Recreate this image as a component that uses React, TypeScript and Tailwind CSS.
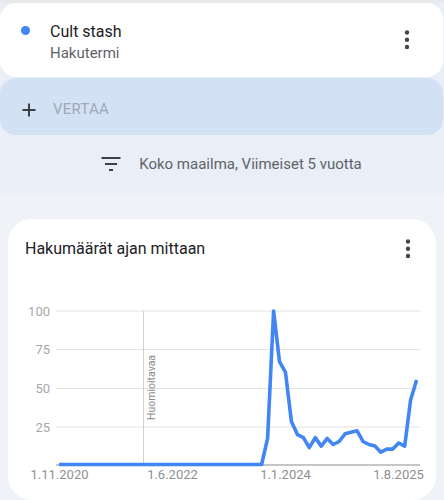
import React from "react";

const vals: number[] = [
  ...Array(35).fill(0),
  17, 100, 67, 60, 28, 19.5, 17.5, 11, 17.5, 12, 17, 13, 15, 20, 21, 22, 15, 13, 12, 8, 10, 10, 14, 12, 42, 55,
];

const x0 = 59;
const step = 5.96;
const yOf = (v: number) => 464.5 - v * 1.535;

function Kebab() {
  return (
    <svg width="8" height="22" viewBox="0 0 8 22" className="text-[#444746]">
      <circle cx="4" cy="3.5" r="2.2" fill="currentColor" />
      <circle cx="4" cy="10.8" r="2.2" fill="currentColor" />
      <circle cx="4" cy="18" r="2.2" fill="currentColor" />
    </svg>
  );
}

function Chart() {
  const pts = vals.map((v, i) => `${(x0 + i * step).toFixed(1)},${yOf(v).toFixed(1)}`).join(" ");
  const grid = [
    { v: 100, y: 311 },
    { v: 75, y: 349.5 },
    { v: 50, y: 388.5 },
    { v: 25, y: 427 },
  ];
  const xlabels = [
    { t: "1.11.2020", x: 59.5 },
    { t: "1.6.2022", x: 172.5 },
    { t: "1.1.2024", x: 285.5 },
    { t: "1.8.2025", x: 398.5 },
  ];
  return (
    <svg width="428" height="230" viewBox="8 270 428 230" className="block">
      {grid.map((g) => (
        <g key={g.v}>
          <line x1="56" x2="420" y1={g.y} y2={g.y} stroke="#e3e3e3" strokeWidth="1" />
          <text x="50" y={g.y + 4.5} textAnchor="end" fontSize="13" fill="#a8a8a8" fontFamily="Roboto, sans-serif">
            {g.v}
          </text>
        </g>
      ))}
      <line x1="143.5" x2="143.5" y1="311" y2="465" stroke="#d0d0d0" strokeWidth="1" />
      <text
        x="154.5"
        y="420"
        transform="rotate(-90 154.5 420)"
        fontSize="10.5"
        fill="#8a8a8a"
        fontFamily="Roboto, sans-serif"
      >
        Huomioitavaa
      </text>
      <line x1="56" x2="420" y1="465" y2="465" stroke="#8d8d8d" strokeWidth="1.2" />
      <polyline points={pts} fill="none" stroke="#4285f4" strokeWidth="3.6" strokeLinejoin="round" />
      {xlabels.map((l) => (
        <text key={l.t} x={l.x} y="478.5" textAnchor="middle" fontSize="13" fill="#8f8f8f" fontFamily="Roboto, sans-serif">
          {l.t}
        </text>
      ))}
    </svg>
  );
}

export default function App() {
  return (
    <div className="w-[444px] h-[500px] overflow-hidden bg-[#eff2f7] font-[Roboto,sans-serif]">
      <div className="bg-[#e9eef7]">
        <div className="h-[3px] bg-[#e7e9ec]" />
        <div className="bg-white rounded-2xl h-[74px] mr-[1px] flex items-start pl-[21px] pt-[17px] pr-[32px]">
          <div className="w-[9px] h-[9px] rounded-full bg-[#4285f4] mt-[5.5px]" />
          <div className="ml-[20px] flex-1">
            <div className="text-[16px] leading-[23px] text-[#202124]">Cult stash</div>
            <div className="text-[15px] leading-[20px] text-[#5f6368]">Hakutermi</div>
          </div>
          <div className="mt-[9px]">
            <Kebab />
          </div>
        </div>
        <div className="mt-[1px] mr-[1px] h-[57px] rounded-2xl bg-[#d3e1f5] flex items-center pl-[21px] pt-[6px]">
          <svg width="16" height="16" viewBox="0 0 16 16" className="text-[#3c4043]">
            <path d="M8 1.5v13M1.5 8h13" stroke="currentColor" strokeWidth="2" />
          </svg>
          <span className="ml-[16px] text-[15px] tracking-[0.2px] text-[#a0a9b6]">VERTAA</span>
        </div>
        <div className="h-[58px] flex items-center justify-center gap-[18px] pl-[19px]">
          <svg width="20" height="14" viewBox="0 0 20 14" className="text-[#3c4043]">
            <path d="M0.5 1h19M4 7h12M8 13h4" stroke="currentColor" strokeWidth="2" />
          </svg>
          <span className="text-[15px] text-[#5f6368]">Koko maailma, Viimeiset 5 vuotta</span>
        </div>
      </div>
      <div className="pt-[26px] px-[8px]">
        <div className="bg-white rounded-3xl h-[281px] overflow-hidden">
          <div className="h-[51px] flex items-start justify-between pl-[17px] pr-[24px] pt-[18px]">
            <span className="text-[16px] leading-[23px] text-[#202124]">Hakumäärät ajan mittaan</span>
            <div className="mt-[1px]">
              <Kebab />
            </div>
          </div>
          <Chart />
        </div>
      </div>
    </div>
  );
}
